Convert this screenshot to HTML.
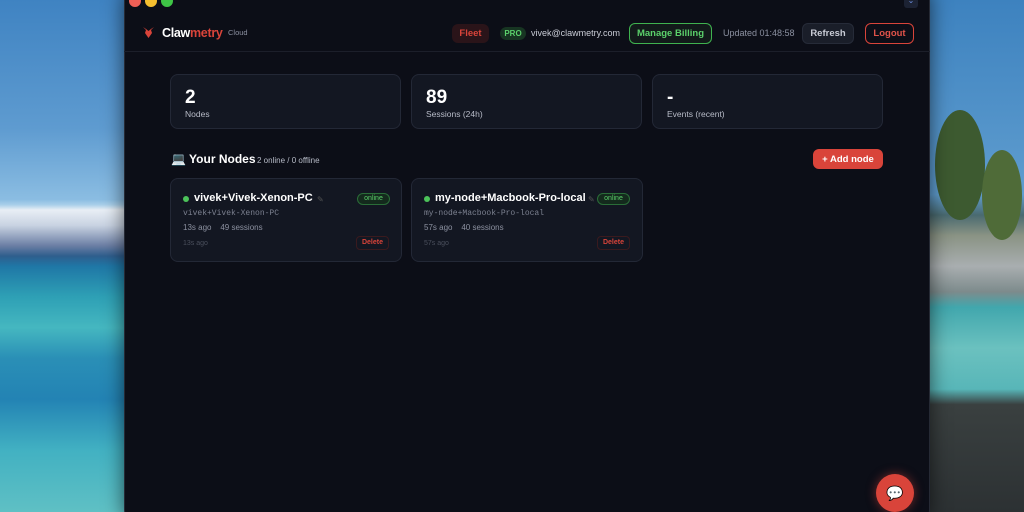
<!DOCTYPE html>
<html style="width:1024px;height:512px;overflow:hidden"><head><style>
*{margin:0;padding:0;box-sizing:border-box}
body{width:1024px;height:512px;overflow:hidden;position:relative;font-family:"Liberation Sans",sans-serif;background:#3f86c4}
.left{position:absolute;left:0;top:0;width:130px;height:512px;background:linear-gradient(180deg,#3f83c2 0%,#5e9bd0 25%,#8bbde2 39%,#a9cfe9 40%,#e8eef5 41%,#c9d3e2 44%,#6b7ea4 48%,#2f5e8d 50%,#1f77a6 52%,#2ea0b5 58%,#45b7c0 64%,#2a8fb6 70%,#2383b4 78%,#42b1c2 88%,#5fc0c4 100%)}
.right{position:absolute;left:925px;top:0;width:99px;height:512px;background:linear-gradient(180deg,#3d82bf 0%,#5f9dcf 38%,#4a6a70 42%,#8a9384 46%,#a9aeb0 52%,#7d8b8c 57%,#41a7ad 60%,#6bc1bf 68%,#58b6b8 76%,#3a4040 79%,#2c3133 100%)}
.tree{position:absolute;border-radius:50%;background:#3d5a30}
.win{position:absolute;left:124px;top:-10px;width:806px;height:530px;background:#0c0e17;border-radius:10px;border:1px solid #262a35;box-shadow:0 0 20px rgba(0,0,0,.6)}
.dot{position:absolute;top:-5px;width:12px;height:12px;border-radius:50%}
.hdr{position:absolute;left:124px;top:0;width:806px;height:52px;border-bottom:1px solid #1c1f2a}
.t{position:absolute;white-space:nowrap}
.btn{position:absolute;border-radius:6px;font-size:9.5px;font-weight:bold;display:flex;align-items:center;justify-content:center}
.card{position:absolute;background:#131722;border:1px solid #232836;border-radius:8px}
.num{position:absolute;left:14px;top:12px;color:#fff;font-size:19px;font-weight:bold}
.lbl{position:absolute;left:14px;top:34px;color:#b8bcc8;font-size:8.5px}
.nc .name{position:absolute;left:23px;top:13px;color:#fff;font-size:11px;font-weight:bold}
.gd{position:absolute;left:12px;top:17px;width:6px;height:6px;border-radius:50%;background:#4cc35a}
.mono{position:absolute;left:12px;top:30px;font-family:"Liberation Mono",monospace;font-size:8px;color:#7c8190}
.meta{position:absolute;left:12px;top:44px;font-size:8px;color:#8c91a0}
.ago{position:absolute;left:12px;top:61px;font-size:7px;color:#4a4f5c}
.on{position:absolute;top:14px;width:33px;height:12px;border:1px solid #2a6d38;background:#142a1d;border-radius:7px;color:#5bd06b;font-size:7px;text-align:center;line-height:10px}
.del{position:absolute;top:57px;width:33px;height:14px;border:1px solid #3a1a1e;border-radius:4px;color:#d9443a;font-size:7px;font-weight:bold;text-align:center;line-height:12px}
</style></head><body>
<div class="left"></div>
<div class="right"></div>
<div class="tree" style="left:935px;top:110px;width:50px;height:110px"></div>
<div class="tree" style="left:982px;top:150px;width:40px;height:90px;background:#4f6b38"></div>
<div class="win"></div>
<div class="dot" style="left:129px;background:#ee5f56"></div>
<div class="dot" style="left:145px;background:#f6bf2f"></div>
<div class="dot" style="left:161px;background:#3fc546"></div>
<div style="position:absolute;left:904px;top:-4px;width:14px;height:12px;border-radius:3px;background:#1c2233;color:#6c8fe0;font-size:8px;text-align:center">⌄</div>
<div class="hdr"></div>
<svg style="position:absolute;left:142px;top:26px" width="13" height="13" viewBox="0 0 13 13"><path d="M1 1 L4 4 L3 7 L6.5 12 L10 7 L9 4 L12 1 L9 3 L6.5 5 L4 3Z" fill="#d9443a"/></svg>
<div class="t" style="left:162px;top:26px;font-size:12.5px;font-weight:bold;color:#fff;letter-spacing:-.3px">Claw<span style="color:#d9443a">metry</span></div>
<div class="t" style="left:228px;top:28px;font-size:7.5px;color:#8b90a0">Cloud</div>
<div class="btn" style="left:452px;top:24px;width:37px;height:19px;background:#2a1419;color:#d9443a">Fleet</div>
<div class="btn" style="left:500px;top:27px;width:26px;height:13px;border-radius:7px;background:#173522;color:#5bd06b;font-size:8px">PRO</div>
<div class="t" style="left:531px;top:28px;font-size:9px;color:#c9ccd6">vivek@clawmetry.com</div>
<div class="btn" style="left:629px;top:23px;width:83px;height:21px;border:1.5px solid #3fb24f;color:#5bd06b;background:#121a1a">Manage Billing</div>
<div class="t" style="left:723px;top:28px;font-size:9px;color:#8b90a0">Updated 01:48:58</div>
<div class="btn" style="left:802px;top:23px;width:52px;height:21px;background:#1a1e29;border:1px solid #262b38;color:#c9ccd6">Refresh</div>
<div class="btn" style="left:865px;top:23px;width:49px;height:21px;border:1.5px solid #d9443a;color:#e0534a">Logout</div>

<div class="card" style="left:170px;top:74px;width:231px;height:55px"><div class="num">2</div><div class="lbl">Nodes</div></div>
<div class="card" style="left:411px;top:74px;width:231px;height:55px"><div class="num">89</div><div class="lbl">Sessions (24h)</div></div>
<div class="card" style="left:652px;top:74px;width:231px;height:55px"><div class="num">-</div><div class="lbl">Events (recent)</div></div>

<div class="t" style="left:171px;top:152px;font-size:12px;font-weight:bold;color:#fff">💻 Your Nodes</div>
<div class="t" style="left:257px;top:156px;font-size:8px;color:#b8bcc8">2 online / 0 offline</div>
<div class="btn" style="left:813px;top:149px;width:70px;height:20px;background:#d9443a;color:#fff">+ Add node</div>

<div class="card nc" style="left:170px;top:178px;width:232px;height:84px">
<div class="gd"></div><div class="name">vivek+Vivek-Xenon-PC</div>
<div class="t" style="left:146px;top:16px;font-size:8px;color:#555">✎</div>
<div class="on" style="left:186px">online</div>
<div class="mono">vivek+Vivek-Xenon-PC</div>
<div class="meta">13s ago &nbsp;&nbsp; 49 sessions</div>
<div class="ago">13s ago</div><div class="del" style="left:185px">Delete</div></div>
<div class="card nc" style="left:411px;top:178px;width:232px;height:84px">
<div class="gd"></div><div class="name">my-node+Macbook-Pro-local</div>
<div class="t" style="left:176px;top:16px;font-size:8px;color:#555">✎</div>
<div class="on" style="left:185px">online</div>
<div class="mono">my-node+Macbook-Pro-local</div>
<div class="meta">57s ago &nbsp;&nbsp; 40 sessions</div>
<div class="ago">57s ago</div><div class="del" style="left:185px">Delete</div></div>

<div style="position:absolute;left:876px;top:474px;width:38px;height:38px;border-radius:50%;background:#d9443a;box-shadow:0 0 10px rgba(217,68,58,.5);color:#fff;font-size:14px;text-align:center;line-height:38px">💬</div>
</body></html>
